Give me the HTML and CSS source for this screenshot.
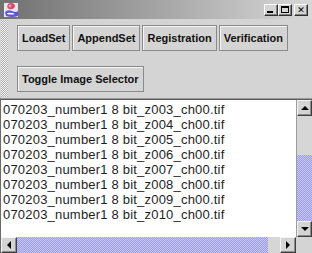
FILE: index.html
```html
<!DOCTYPE html>
<html>
<head>
<meta charset="utf-8">
<link rel="stylesheet" href="styles.css">
</head>
<body>
<div class="window">
  <div class="titlebar">
    <svg class="app-icon" viewBox="0 0 16 16" width="16" height="16">
      <rect x="1" y="1" width="14" height="14" fill="#e8e4f0"/>
      <path d="M5 2 Q8 0 11 2 Q13 4 11 6 Q9 8 6 7 Q3 5 5 2Z" fill="#d84a6a"/>
      <circle cx="7" cy="4" r="1.4" fill="#f4a0b0"/>
      <path d="M2 10 Q5 7 9 9 Q13 11 15 9 L15 14 Q9 16 3 14 Z" fill="#5a5ad0"/>
      <path d="M4 11 Q8 10 12 12 Q8 13 4 12Z" fill="#ffffff"/>
    </svg>
    <div class="caption">
      <span class="cap-btn"><span class="glyph-min"></span></span>
      <span class="cap-btn"><span class="glyph-max"></span></span>
      <span class="cap-btn close">✕</span>
    </div>
  </div>
  <div class="toolbar">
    <div class="gripper"></div>
    <div class="tools">
      <div class="tool-row">
        <button class="tool-btn">LoadSet</button>
        <button class="tool-btn">AppendSet</button>
        <button class="tool-btn">Registration</button>
        <button class="tool-btn">Verification</button>
      </div>
      <div class="tool-row">
        <button class="tool-btn">Toggle Image Selector</button>
      </div>
    </div>
  </div>
  <div class="scrollpane">
    <ul class="file-list">
      <li>070203_number1 8 bit_z003_ch00.tif</li>
      <li>070203_number1 8 bit_z004_ch00.tif</li>
      <li>070203_number1 8 bit_z005_ch00.tif</li>
      <li>070203_number1 8 bit_z006_ch00.tif</li>
      <li>070203_number1 8 bit_z007_ch00.tif</li>
      <li>070203_number1 8 bit_z008_ch00.tif</li>
      <li>070203_number1 8 bit_z009_ch00.tif</li>
      <li>070203_number1 8 bit_z010_ch00.tif</li>
    </ul>
    <div class="vscroll">
      <div class="arrow"><span class="tri tri-up"></span></div>
      <div class="vtrack"><div class="vspace"></div><div class="thumb vthumb"></div></div>
      <div class="arrow"><span class="tri tri-down"></span></div>
    </div>
    <div class="hscroll">
      <div class="arrow"><span class="tri tri-left"></span></div>
      <div class="htrack"><div class="thumb hthumb"></div></div>
      <div class="arrow"><span class="tri tri-right"></span></div>
    </div>
    <div class="corner"></div>
  </div>
</div>
</body>
</html>
```
FILE: styles.css
```css
* { box-sizing: border-box; margin: 0; padding: 0; }
html, body { width: 312px; height: 253px; overflow: hidden; }
body { background: #d4d4d4; font-family: "Liberation Sans", Arial, sans-serif; }

.window { display: flex; flex-direction: column; width: 312px; height: 253px; }

.titlebar {
  height: 19px; flex: none;
  display: flex; align-items: center; justify-content: space-between;
  padding: 0 4px 0 3px;
  background: linear-gradient(to right, #707070, #d8d8d8);
}
.app-icon { display: block; }
.caption { display: flex; align-items: center; }
.cap-btn {
  width: 14px; height: 12px;
  background: #d4d4d4;
  border: 1px solid; border-color: #fff #303030 #303030 #fff;
  box-shadow: inset -1px -1px #808080;
  display: flex; align-items: center; justify-content: center;
  font: bold 9px "DejaVu Sans", sans-serif; color: #000;
}
.cap-btn.close { margin-left: 2px; }
.glyph-min { width: 6px; height: 2px; background: #000; margin-top: 5px; margin-right: 2px; }
.glyph-max { width: 8px; height: 7px; border: 1px solid #000; border-top-width: 2px; }

.toolbar { height: 79px; flex: none; display: flex; }
.gripper {
  width: 7px; margin: 1px 0 1px 1px;
  background: repeating-conic-gradient(#f2f2f2 0 25%, #b0b0b0 0 50%) 0 0 / 2px 2px;
}
.tools { display: flex; flex-direction: column; gap: 15px; padding: 6px 0 0 9px; }
.tool-row { display: flex; gap: 2px; }
.tool-btn {
  height: 26px; padding: 0 4px;
  font: bold 11px "Liberation Sans", Arial, sans-serif; color: #111;
  background: #d4d4d4;
  border: 1px solid #8a8a8a;
  box-shadow: inset 1px 1px #f6f6f6;
}

.scrollpane {
  flex: 1;
  display: grid;
  grid-template-columns: 1fr 16px;
  grid-template-rows: 1fr 16px;
  border-top: 1px solid #9a9a9a;
  border-left: 1px solid #6a6a6a;
  box-shadow: inset 0 1px #5c5c5c;
  padding-top: 1px;
}
.file-list {
  list-style: none; background: #fff;
  padding: 2px 0 0 2px;
  font: 13px/15px "Liberation Sans", Arial, sans-serif; color: #1e1e1e;
  letter-spacing: 0.2px;
  white-space: nowrap; overflow: hidden;
}
.vscroll { display: flex; flex-direction: column; border-left: 1px solid #9c9c9c; }
.vtrack { flex: 1; display: flex; flex-direction: column; background: #d6d6d6; }
.vspace { height: 39px; }
.vthumb { flex: 1; }
.hscroll { display: flex; }
.htrack { flex: 1; display: flex; background: #d6d6d6; }
.hthumb { width: 251px; }
.thumb {
  background: repeating-conic-gradient(#9e9ee2 0 25%, #c6c6f4 0 50%) 0 0 / 2px 2px;
}
.arrow {
  width: 16px; height: 16px; flex: none;
  background: #d4d4d4;
  border: 1px solid; border-color: #f4f4f4 #404040 #404040 #f4f4f4;
  box-shadow: inset -1px -1px #8c8c8c;
  display: flex; align-items: center; justify-content: center;
}
.vscroll .arrow { width: 15px; }
.tri { width: 0; height: 0; border: 4px solid transparent; }
.tri-up { border-bottom-color: #000; border-top-width: 0; margin-top: -1px; }
.tri-down { border-top-color: #000; border-bottom-width: 0; }
.tri-left { border-right-color: #000; border-left-width: 0; }
.tri-right { border-left-color: #000; border-right-width: 0; }
.corner { background: #d4d4d4; }
```
